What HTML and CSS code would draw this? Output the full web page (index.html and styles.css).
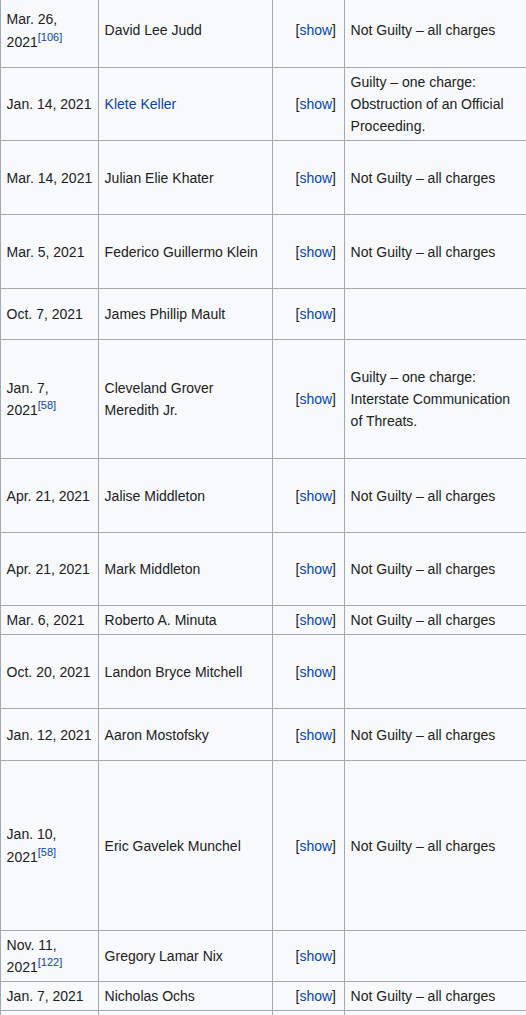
FILE: index.html
```html
<!DOCTYPE html>
<html lang="en">
<head>
<meta charset="utf-8">
<title>Defendants</title>
<link rel="stylesheet" href="styles.css">
</head>
<body>
<table class="wikitable">
  <colgroup>
    <col class="c-date">
    <col class="c-name">
    <col class="c-show">
    <col class="c-verdict">
  </colgroup>
  <tbody>
    <tr class="h74"><td>Mar. 26, 2021<sup class="ref"><a href="#">[106]</a></sup></td><td>David Lee Judd</td><td class="toggle">[<a href="#">show</a>]</td><td>Not Guilty – all charges</td></tr>
    <tr class="h73"><td>Jan. 14, 2021</td><td><a href="#">Klete Keller</a></td><td class="toggle">[<a href="#">show</a>]</td><td>Guilty – one charge: Obstruction of an Official Proceeding.</td></tr>
    <tr class="h74"><td>Mar. 14, 2021</td><td>Julian Elie Khater</td><td class="toggle">[<a href="#">show</a>]</td><td>Not Guilty – all charges</td></tr>
    <tr class="h74"><td>Mar. 5, 2021</td><td>Federico Guillermo Klein</td><td class="toggle">[<a href="#">show</a>]</td><td>Not Guilty – all charges</td></tr>
    <tr class="h51"><td>Oct. 7, 2021</td><td>James Phillip Mault</td><td class="toggle">[<a href="#">show</a>]</td><td></td></tr>
    <tr class="h119"><td>Jan. 7, 2021<sup class="ref"><a href="#">[58]</a></sup></td><td>Cleveland Grover Meredith Jr.</td><td class="toggle">[<a href="#">show</a>]</td><td>Guilty – one charge: Interstate Communication of Threats.</td></tr>
    <tr class="h74"><td>Apr. 21, 2021</td><td>Jalise Middleton</td><td class="toggle">[<a href="#">show</a>]</td><td>Not Guilty – all charges</td></tr>
    <tr class="h73"><td>Apr. 21, 2021</td><td>Mark Middleton</td><td class="toggle">[<a href="#">show</a>]</td><td>Not Guilty – all charges</td></tr>
    <tr class="h29"><td>Mar. 6, 2021</td><td>Roberto A. Minuta</td><td class="toggle">[<a href="#">show</a>]</td><td>Not Guilty – all charges</td></tr>
    <tr class="h74"><td>Oct. 20, 2021</td><td>Landon Bryce Mitchell</td><td class="toggle">[<a href="#">show</a>]</td><td></td></tr>
    <tr class="h52"><td>Jan. 12, 2021</td><td>Aaron Mostofsky</td><td class="toggle">[<a href="#">show</a>]</td><td>Not Guilty – all charges</td></tr>
    <tr class="h170"><td>Jan. 10, 2021<sup class="ref"><a href="#">[58]</a></sup></td><td>Eric Gavelek Munchel</td><td class="toggle">[<a href="#">show</a>]</td><td>Not Guilty – all charges</td></tr>
    <tr class="h51"><td>Nov. 11, 2021<sup class="ref"><a href="#">[122]</a></sup></td><td>Gregory Lamar Nix</td><td class="toggle">[<a href="#">show</a>]</td><td></td></tr>
    <tr class="h29"><td>Jan. 7, 2021</td><td>Nicholas Ochs</td><td class="toggle">[<a href="#">show</a>]</td><td>Not Guilty – all charges</td></tr>
    <tr class="h74"><td></td><td></td><td></td><td></td></tr>
  </tbody>
</table>
</body>
</html>
```

FILE: styles.css
```css
html, body {
  margin: 0;
  padding: 0;
  overflow: hidden;
  background: #ffffff;
}

body {
  font-family: "Liberation Sans", Arial, sans-serif;
  font-size: 14px;
  line-height: 22.4px;
  color: #202122;
}

a {
  color: #0645ad;
  text-decoration: none;
}

.wikitable {
  border-collapse: collapse;
  table-layout: fixed;
  width: 528px;
  margin-top: -7px;
  background: #f8f9fa;
  border: 1px solid #a2a9b1;
}

.c-date { width: 98px; }
.c-name { width: 174px; }
.c-show { width: 72px; }
.c-verdict { width: 184px; }

.wikitable td {
  border: 1px solid #a2a9b1;
  padding: 2.5px 5.6px;
  vertical-align: middle;
  text-align: left;
}

.wikitable td.toggle {
  text-align: right;
  padding-right: 8px;
}

.ref {
  font-size: 11px;
  line-height: 1;
  vertical-align: super;
}

.h29 { height: 29px; }
.h51 { height: 51px; }
.h52 { height: 52px; }
.h73 { height: 73px; }
.h74 { height: 74px; }
.h119 { height: 119px; }
.h170 { height: 170px; }
```
